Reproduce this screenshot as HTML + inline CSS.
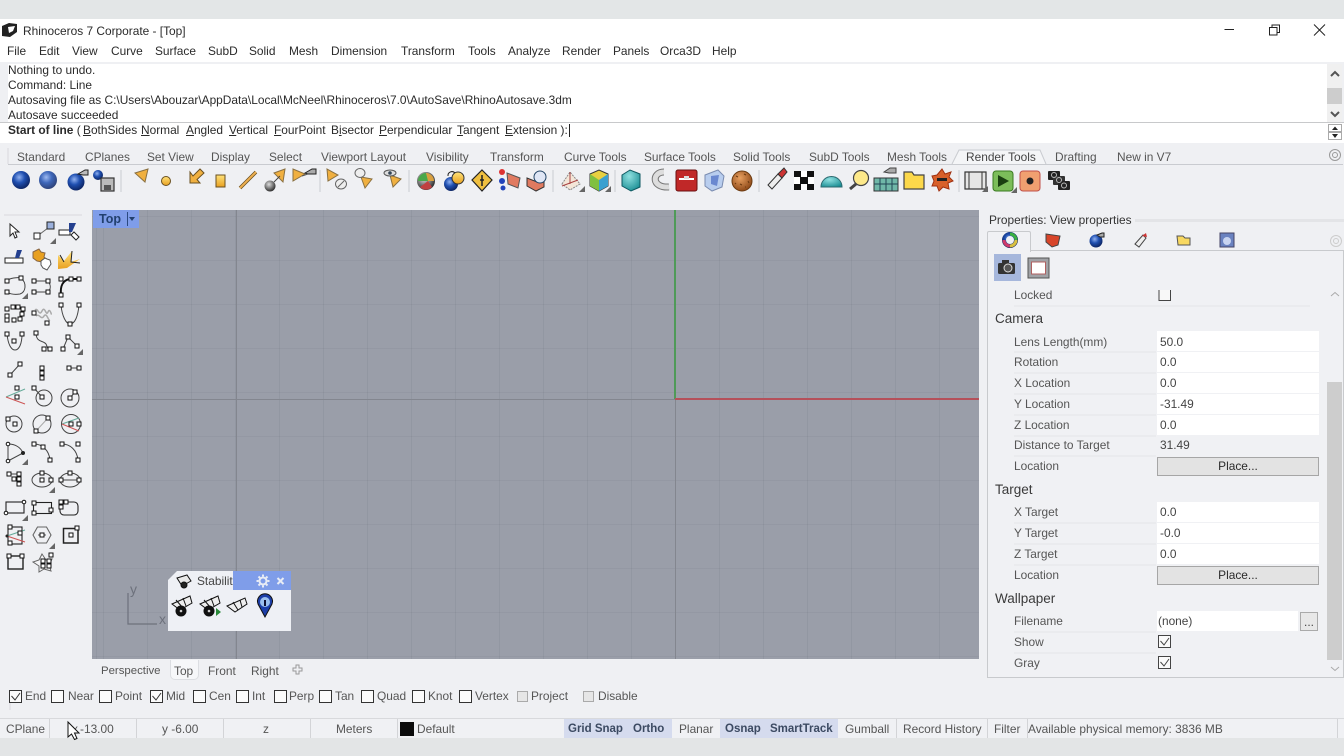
<!DOCTYPE html>
<html><head><meta charset="utf-8"><title>Rhinoceros</title>
<style>
html,body{margin:0;padding:0;width:1344px;height:756px;overflow:hidden;background:#eff0f3}
body{position:relative;font:11.9px/14px "Liberation Sans",sans-serif;color:#2a2a2a}
.b{position:absolute}
.t{position:absolute;white-space:nowrap;line-height:14px}
.g{color:#555}
.h{font-size:13.5px;color:#3a3a3a}
.c{text-align:center}
.st{font-weight:bold;color:#3c4a62;font-size:11.5px}
u{text-decoration:underline}
svg{position:absolute;left:0;top:0;filter:blur(.3px)}
</style></head><body>
<div class="b" style="left:0;top:0;width:1344px;height:19px;background:#e3e6e7"></div>
<div class="b" style="left:0;top:19px;width:1344px;height:43px;background:#fff"></div>
<div class="b" style="left:0;top:738px;width:1344px;height:18px;background:#e3e5e6"></div>
<div class="b" style="left:8px;top:64px;width:1319px;height:58px;background:#fff"></div>
<div class="b" style="left:0;top:122px;width:1344px;height:1px;background:#c8c9cb"></div>
<div class="b" style="left:0;top:123px;width:1344px;height:20px;background:#fff"></div>
<div class="b" style="left:1327px;top:64px;width:15px;height:58px;background:#f0f0f0"></div>
<div class="b" style="left:1327px;top:88px;width:15px;height:16px;background:#cdcdcd"></div>
<div class="b" style="left:8px;top:164px;width:1335px;height:1px;background:#c9cbd0"></div>
<!-- viewport -->
<div class="b" style="left:92px;top:210px;width:887px;height:449px;background-color:#9a9ea9;background-image:repeating-linear-gradient(90deg,rgba(70,75,90,.09) 0 1px,transparent 1px 44px),repeating-linear-gradient(0deg,rgba(70,75,90,.07) 0 1px,transparent 1px 44px);background-position:11px 0,0 -2px"></div>
<div class="b" style="left:92px;top:399px;width:583px;height:1px;background:#83868f"></div>
<div class="b" style="left:236px;top:210px;width:1px;height:449px;background:#83868f"></div>
<div class="b" style="left:675px;top:399px;width:1px;height:260px;background:#83868f"></div>
<div class="b" style="left:674px;top:210px;width:2px;height:189px;background:#4f9a58"></div>
<div class="b" style="left:675px;top:398px;width:304px;height:2px;background:#b5505a"></div>
<div class="b" style="left:93px;top:210px;width:46px;height:18px;background:#7f9de9"></div>
<div class="b" style="left:127px;top:212px;width:1px;height:14px;background:#2b4a80"></div>
<div class="t" style="left:99px;top:212px;font-weight:bold;color:#22406f;font-size:12.5px">Top</div>
<!-- right panel -->
<div class="b" style="left:987px;top:250px;width:355px;height:426px;background:#f0f1f4;border:1px solid #c8cacd"></div>
<div class="b" style="left:987px;top:231px;width:42px;height:20px;background:#f0f1f4;border:1px solid #c8cacd;border-bottom:0;border-radius:2px 2px 0 0"></div>
<div class="b" style="left:1135px;top:219px;width:209px;height:3px;background:#e3e4e7"></div>
<div class="b" style="left:994px;top:254px;width:27px;height:27px;background:#a6b7dc"></div>
<div class="b" style="left:1157px;top:331px;width:162px;height:20px;background:#fff"></div>
<div class="b" style="left:1157px;top:352px;width:162px;height:20px;background:#fff"></div>
<div class="b" style="left:1157px;top:373px;width:162px;height:20px;background:#fff"></div>
<div class="b" style="left:1157px;top:394px;width:162px;height:20px;background:#fff"></div>
<div class="b" style="left:1157px;top:415px;width:162px;height:20px;background:#fff"></div>
<div class="b" style="left:1157px;top:457px;width:160px;height:17px;background:#e3e3e3;border:1px solid #a6a6a6"></div>
<div class="b" style="left:1157px;top:502px;width:162px;height:20px;background:#fff"></div>
<div class="b" style="left:1157px;top:523px;width:162px;height:20px;background:#fff"></div>
<div class="b" style="left:1157px;top:544px;width:162px;height:20px;background:#fff"></div>
<div class="b" style="left:1157px;top:566px;width:160px;height:17px;background:#e3e3e3;border:1px solid #a6a6a6"></div>
<div class="b" style="left:1157px;top:611px;width:141px;height:20px;background:#fff"></div>
<div class="b" style="left:1300px;top:612px;width:16px;height:17px;background:#e8e8e8;border:1px solid #aaa"></div>
<div class="b" style="left:1327px;top:382px;width:15px;height:278px;background:#cdcdcd"></div>
<!-- viewport tabs area -->
<div class="b" style="left:170px;top:660px;width:27px;height:19px;background:#f6f7f9;border:1px solid #dcdee2;border-top:0;border-radius:0 0 5px 5px"></div>
<!-- status bar -->
<div class="b" style="left:0;top:718px;width:1344px;height:20px;background:#f0f1f4;border-top:1px solid #d8d9dc;box-sizing:border-box"></div>
<div class="b" style="left:564px;top:719px;width:63px;height:19px;background:#d5dbee"></div>
<div class="b" style="left:627px;top:719px;width:45px;height:19px;background:#d5dbee"></div>
<div class="b" style="left:720px;top:719px;width:46px;height:19px;background:#d5dbee"></div>
<div class="b" style="left:766px;top:719px;width:72px;height:19px;background:#d5dbee"></div>
<div class="b" style="left:49px;top:719px;width:1px;height:19px;background:#d3d4d7"></div>
<div class="b" style="left:136px;top:719px;width:1px;height:19px;background:#d3d4d7"></div>
<div class="b" style="left:223px;top:719px;width:1px;height:19px;background:#d3d4d7"></div>
<div class="b" style="left:310px;top:719px;width:1px;height:19px;background:#d3d4d7"></div>
<div class="b" style="left:397px;top:719px;width:1px;height:19px;background:#d3d4d7"></div>
<div class="b" style="left:896px;top:719px;width:1px;height:19px;background:#d3d4d7"></div>
<div class="b" style="left:987px;top:719px;width:1px;height:19px;background:#d3d4d7"></div>
<div class="b" style="left:1027px;top:719px;width:1px;height:19px;background:#d3d4d7"></div>
<div class="b" style="left:1337px;top:719px;width:1px;height:19px;background:#d3d4d7"></div>
<!-- floating toolbar -->
<div class="b" style="left:168px;top:571px;width:123px;height:60px;background:#eef0f5;clip-path:polygon(9px 0,100% 0,100% 100%,0 100%,0 9px)"></div>
<div class="b" style="left:233px;top:571px;width:58px;height:19px;background:#7f9de9"></div>

<svg width="1344" height="756" viewBox="0 0 1344 756" fill="none">
<defs>
<radialGradient id="bl" cx=".4" cy=".35" r=".7"><stop offset="0" stop-color="#8fb0f0"/><stop offset=".45" stop-color="#1f4fb0"/><stop offset="1" stop-color="#0a1f5a"/></radialGradient>
<radialGradient id="gr" cx=".4" cy=".35" r=".7"><stop offset="0" stop-color="#ddd"/><stop offset="1" stop-color="#222"/></radialGradient>
<radialGradient id="br" cx=".4" cy=".35" r=".7"><stop offset="0" stop-color="#e8a060"/><stop offset="1" stop-color="#8a4515"/></radialGradient>
<radialGradient id="te" cx=".4" cy=".3" r=".8"><stop offset="0" stop-color="#8fe0e0"/><stop offset="1" stop-color="#158a90"/></radialGradient>
<linearGradient id="ye" x1="0" y1="0" x2="0" y2="1"><stop offset="0" stop-color="#ffe27a"/><stop offset="1" stop-color="#e8a020"/></linearGradient>
<rect id="n" x="-2" y="-2" width="4" height="4" fill="#fff" stroke="#111" stroke-width="1"/>
<path id="tri" d="M0 6H6V0Z" fill="#666"/>
</defs>
<!-- title icon -->
<path d="M2 26L9 23L17 24L17 32L10 37L2 36Z" fill="#222"/><path d="M8 27L15 26L13 31L9 33Z" fill="#fff"/>
<!-- window controls -->
<path d="M1224.500 29.500H1234" stroke="#222"/>
<path d="M1269.500 27.500h7.500v7.500h-7.500z M1272 27.500v-2.500h7.500v7.500h-2.500" stroke="#222"/>
<path d="M1314 24.500L1325 35.500M1325 24.500L1314 35.500" stroke="#222"/>
<!-- cmd scroll -->
<path d="M1331 76L1335 72L1339 76M1331 112L1335 116L1339 112" stroke="#555" stroke-width="2"/>
<rect x="1328.500" y="124.500" width="13" height="7" stroke="#aaa" fill="#fff"/><rect x="1328.500" y="132.500" width="13" height="7" stroke="#aaa" fill="#fff"/>
<path d="M1332 130L1335 126.500L1338 130ZM1332 134L1335 138L1338 134Z" fill="#222"/>
<!-- gear top -->
<g stroke="#999" fill="none"><circle cx="1335" cy="155" r="5.500"/><circle cx="1335" cy="155" r="2.500"/></g>
<!-- tab separator render tools -->
<path d="M952 164L959 150H1040L1046 164" stroke="#c9cbd0" fill="#f4f5f7"/>
<path d="M8 148V164M4 215H82M10 690V710" stroke="#d8d9dc"/>
<!-- separators -->
<path d="M121 170V192M320 170V192M409 170V192M553 170V192M615 170V192M759 170V192M959 170V192" stroke="#c9cbd0"/>

<!-- top toolbar -->
<circle cx="21" cy="180" r="9" fill="url(#bl)"/>
<circle cx="48" cy="180" r="9" fill="url(#bl)" opacity=".85"/>
<circle cx="76" cy="182" r="8.500" fill="url(#bl)"/><path d="M78 174L85 170H88V175H83Z" fill="#bbb" stroke="#222"/>
<circle cx="98" cy="175" r="5" fill="url(#bl)"/><rect x="101" y="178" width="13" height="13" fill="#bbb" stroke="#333" stroke-width="1.200"/><rect x="104" y="185" width="7" height="5" fill="#555"/>
<g fill="#f0b040" stroke="#8a7040">
<path d="M135 173L148 169L145 182Z"/>
<path d="M285 169L274 173L283 182Z"/>
<path d="M293 169L293 181L305 174Z"/>
<path d="M327 169L328 181L338 175Z"/>
<path d="M361 177L372 179L365 188Z"/>
<path d="M390 175L401 179L393 187Z"/>
</g>
<circle cx="166" cy="181" r="4.500" fill="url(#ye)" stroke="#6a5020"/>
<path d="M190 172V183H200L197 179.500L204 173L200 169L193 176Z" fill="#f0b040" stroke="#6a5020"/>
<rect x="216" y="175" width="9" height="12" fill="url(#ye)" stroke="#6a5020"/>
<path d="M240 188L256 172" stroke="#6a5020" stroke-width="3.500"/><path d="M240 188L256 172" stroke="#eeb050" stroke-width="2"/>
<circle cx="270" cy="186" r="5.500" fill="url(#gr)"/><path d="M274 182L280 176" stroke="#444"/>
<path d="M305 173L312 169H316V174H308Z" fill="#aaa" stroke="#222"/><path d="M302 176L308 174" stroke="#555"/>
<ellipse cx="341" cy="184" rx="5.500" ry="5" stroke="#666" fill="#eee"/><path d="M338 187L344 181" stroke="#666"/>
<ellipse cx="360" cy="173" rx="5" ry="4.500" stroke="#666" fill="#eee"/>
<ellipse cx="390" cy="173" rx="6" ry="3" stroke="#555" fill="#ddd"/><circle cx="390" cy="173" r="1.800" fill="#345"/>
<circle cx="426" cy="181" r="9" fill="url(#gr)"/><path d="M418 181a8 8 0 0 1 8 -8l3 8z" fill="#4aa84a"/><path d="M426 173a8 8 0 0 1 8 8h-6z" fill="#d9a040"/><path d="M420 187a8 8 0 0 0 12 0l-4 -6z" fill="#c04040"/>
<circle cx="451" cy="184" r="7" fill="url(#bl)"/><circle cx="458" cy="178" r="6" fill="url(#ye)" stroke="#333"/><path d="M448 176a4 4 0 0 1 7 -3" stroke="#222"/>
<path d="M482 170L492 180L482 191L472 180Z" fill="#f0c040" stroke="#222" stroke-width="1.200"/><path d="M482 175V186M480 180H484" stroke="#222" stroke-width="1.500"/>
<circle cx="502" cy="172" r="3" fill="#d33"/><circle cx="502" cy="181" r="3" fill="#24b"/><path d="M507 173L520 178L518 188L508 184Z" fill="#e07a60" stroke="#555"/><circle cx="503" cy="188" r="2.500" fill="#24b"/>
<path d="M527 178L537 182L544 178L544 187L536 191L527 186Z" fill="#e07a60" stroke="#333"/><circle cx="540" cy="177" r="6" stroke="#246" fill="#dfe6f5"/>
<path d="M562 184L570 172L580 184L570 190Z" stroke="#888" stroke-dasharray="2 1" fill="#f4e6d8"/><path d="M570 172V184M562 186L578 180" stroke="#a44"/><use href="#tri" transform="translate(579 186)"/>
<path d="M590 174L599 170L608 174V186L599 191L590 186Z" fill="#e8d040" stroke="#333"/><path d="M599 180L608 174V186L599 191Z" fill="#3aa0d0"/><path d="M590 174L599 180V191L590 186Z" fill="#80c040"/><use href="#tri" transform="translate(605 186)"/>
<path d="M622 175L630 170L640 174V187L631 191L622 186Z" fill="url(#te)" stroke="#0d5860"/>
<path d="M664 172C652 172 651 188 669 187" stroke="#777" stroke-width="7"/><path d="M664 172C652 172 651 188 669 187" stroke="#ddd" stroke-width="5"/>
<rect x="676" y="170" width="21" height="21" rx="2" fill="#c02828" stroke="#6a1010"/><rect x="679" y="178" width="15" height="2" fill="#fff"/><rect x="684" y="176" width="5" height="3" fill="#ddd"/>
<path d="M705 175L718 170L724 176L722 187L712 191L705 186Z" fill="#b8cdee" stroke="#7a8cb0"/><path d="M711 176L719 175L717 186L711 184Z" fill="#6a88d0"/>
<circle cx="742" cy="181" r="10" fill="url(#br)" stroke="#6a3a10"/><path d="M736 176l2 1M744 174l2 1M748 181l1 2M740 184l2 1M735 183l1 1M745 187l1 0" stroke="#6a3a10"/>
<path d="M768 185L778 174L782 178L772 189Z" fill="#eee" stroke="#333"/><path d="M778 174L784 168L787 172L782 178Z" fill="#c33" stroke="#333"/>
<rect x="794" y="171" width="20" height="19" fill="#111"/><rect x="801" y="171" width="6" height="6" fill="#fff"/><rect x="794" y="177" width="6" height="7" fill="#fff"/><rect x="808" y="177" width="6" height="7" fill="#fff"/><rect x="801" y="184" width="6" height="6" fill="#fff"/>
<path d="M821 187a10 10 0 0 1 21 0Z" fill="url(#te)" stroke="#2c6a70"/>
<circle cx="861" cy="178" r="7.500" fill="#fde98a" stroke="#444" stroke-width="1.200"/><path d="M856 184L850 189" stroke="#444" stroke-width="3"/>
<rect x="874" y="178" width="24" height="13" fill="#6fb7a8" stroke="#333"/><path d="M880 178v13M886 178v13M892 178v13M874 184h24" stroke="#245"/><path d="M884 172L890 168H896V173H889Z" fill="#aaa" stroke="#444"/>
<path d="M904 172H912L914 175H924V189H904Z" fill="#fcd84a" stroke="#444" stroke-width="1.200"/>
<path d="M942 169L945 174L951 172L949 177L953 181L948 183L949 189L943 187L939 191L937 186L932 186L934 181L932 176L937 175Z" fill="#d8602a" stroke="#a03010"/><rect x="937" y="178" width="10" height="3" fill="#222"/>
<rect x="965" y="172" width="21" height="17" fill="#e6e6e6" stroke="#333" stroke-width="1.200"/><path d="M969 172v17M982 172v17" stroke="#333"/><use href="#tri" transform="translate(982 186)"/>
<rect x="993" y="171" width="20" height="20" rx="3" fill="#7cbd5a" stroke="#3a7a20"/><path d="M998 175L1009 181L998 187Z" fill="#1a4010"/><use href="#tri" transform="translate(1011 187)"/>
<rect x="1020" y="171" width="20" height="20" rx="3" fill="#f0a070" stroke="#c0504a"/><circle cx="1030" cy="181" r="3.500" fill="#222"/>
<rect x="1048" y="171" width="12" height="9" rx="1" fill="#222"/><rect x="1053" y="176" width="12" height="9" rx="1" fill="#333"/><rect x="1058" y="181" width="12" height="9" rx="1" fill="#222"/><circle cx="1054" cy="175" r="2.500" stroke="#bbb"/><circle cx="1059" cy="180" r="2.500" stroke="#bbb"/><circle cx="1064" cy="185.500" r="2.500" stroke="#bbb"/>

<!-- left toolbar -->
<g stroke="#222" stroke-width="1">
<path d="M10 224L10 236L13 233L15 238L17 237L15 232L19 232Z" fill="#fff"/>
<path d="M40 234L48 228" stroke="#666"/><rect x="34" y="233" width="6" height="6" fill="#fff"/><rect x="47" y="222" width="7" height="7" fill="#9bb0dc"/><use href="#tri" transform="translate(50 238)" stroke="none"/>
<rect x="59" y="230" width="11" height="5" fill="#fff"/><path d="M69 223H76L72 232H69Z" fill="#24408f" stroke="none"/><path d="M71 235L76 240L79 237L74 232Z" fill="#fff"/>
<rect x="5" y="258" width="18" height="5" fill="#fff"/><path d="M17 250H22L19 258H15Z" fill="#24408f" stroke="none"/>
<path d="M33 252l4 -2 2 -1 2 3 4 1 -1 4 2 2 -4 3 -5 -1 -4 -3z" fill="#e8a020" stroke="#864"/><path d="M41 261l4 -3 2 1 3 1 1 4 -2 3 -2 3 -4 -2 -2 -3z" fill="#fff" stroke="#555"/>
<path d="M58 269V255L64 261L72 251L71 262L80 259L67 268Z" fill="url(#ye)" stroke="none"/><path d="M60 255L64 262M72 251L71 262L80 263" stroke="#222"/>
</g>
<g stroke="#444" stroke-width="1">
<path d="M7 281C9 278 18 277 21 278C27 283 26 292 20 294C14 295 10 294 7 292"/>
<path d="M34 281H48C51 285 51 289 48 292H34"/>
<path d="M61 295C60 286 63 280 70 279H79" stroke="#111" stroke-width="2"/>
<path d="M35 310c3 -3 4 7 7 1c3 -6 4 6 6 1c2 -5 4 5 3 1M36 316c4 -3 5 5 8 0c3 -4 4 5 6 4" stroke="#aaa" stroke-width="1.500"/>
<path d="M61 305C62 316 66 324 70 324C75 324 78 316 79 305"/>
<path d="M7 334C8 344 11 350 15 350C19 350 22 344 22 334"/>
<path d="M36 334C37 343 43 340 46 344C48 348 47 349 50 349"/>
<path d="M63 349L68 337L77 346"/>
<path d="M10 375L20 364"/><path d="M42 368V378"/><path d="M69 368H79"/>
<path d="M6 397L25 389" stroke="#6a9"/><path d="M6 397L25 404" stroke="#c55"/>
<path d="M34 388L42 397"/><circle cx="44" cy="398" r="8"/><circle cx="70" cy="398" r="9"/><path d="M70 398L75 392"/>
<circle cx="14" cy="424" r="8"/><circle cx="42" cy="424" r="9"/><path d="M36 431L48 418" stroke="#aaa"/><circle cx="71" cy="424" r="9.500"/><path d="M62 424L79 418" stroke="#6a9"/><path d="M62 424L79 431" stroke="#c55"/>
<path d="M8 444C16 444 21 448 23 453L8 461Z"/><path d="M34 444C42 444 49 450 50 460"/><path d="M62 444C70 444 77 450 78 460"/>
<ellipse cx="42" cy="480" rx="10" ry="7"/><ellipse cx="70" cy="480" rx="10" ry="7"/><path d="M61 480H79"/>
<path d="M9 474H19M14 479H19V484"/>
</g>
<g stroke="#222" stroke-width="1.100">
<rect x="6" y="502" width="18" height="11"/><rect x="33.500" y="502.500" width="18" height="11"/><rect x="60" y="502" width="18" height="13" rx="4"/>
<rect x="8" y="527" width="14" height="17"/><path d="M7 536L25 530" stroke="#6a9"/><path d="M7 536L25 542" stroke="#c55"/>
<path d="M33 535l4.500 -8h9l4.500 8l-4.500 8h-9z" stroke="#666"/><path d="M38 535H46" stroke="#666"/><rect x="63.500" y="528.500" width="14.500" height="14.500" stroke-width="1.500"/><rect x="8" y="556" width="15" height="13" stroke-width="1.400"/>
<path d="M42 554L46 560L52 559L49 565L51 571L44 569L39 572L39 566L33 562L39 560Z" stroke="#666" stroke-width="1" fill="#f4f4f6"/>
</g>
<g>
<use href="#tri" x="22" y="293"/>
<use href="#n" x="7" y="281"/><use href="#n" x="21" y="278"/><use href="#n" x="7" y="292"/>
<use href="#n" x="34" y="281"/><use href="#n" x="48" y="281"/><use href="#n" x="34" y="292"/><use href="#n" x="48" y="292"/>
<use href="#n" x="61" y="295"/><use href="#n" x="61" y="279"/><use href="#n" x="71" y="279"/><use href="#n" x="79" y="279"/>
<use href="#n" x="7" y="309"/><use href="#n" x="13" y="307"/><use href="#n" x="18" y="307"/><use href="#n" x="23" y="309"/><use href="#n" x="22" y="314"/><use href="#n" x="7" y="316"/><use href="#n" x="7" y="320"/><use href="#n" x="14" y="320"/><use href="#n" x="20" y="319"/>
<use href="#n" x="34" y="313"/><use href="#n" x="47" y="323"/>
<use href="#n" x="61" y="305"/><use href="#n" x="70" y="324"/><use href="#n" x="79" y="305"/>
<use href="#n" x="7" y="334"/><use href="#n" x="14" y="341"/><use href="#n" x="22" y="334"/>
<use href="#n" x="36" y="333"/><use href="#n" x="44" y="349"/><use href="#n" x="50" y="349"/>
<use href="#tri" x="77" y="349"/><use href="#n" x="63" y="349"/><use href="#n" x="68" y="337"/><use href="#n" x="77" y="346"/>
<use href="#n" x="10" y="375"/><use href="#n" x="20" y="364"/><use href="#n" x="42" y="368"/><use href="#n" x="42" y="373"/><use href="#n" x="42" y="378"/><use href="#n" x="69" y="368"/><use href="#n" x="79" y="368"/>
<use href="#n" x="17" y="388"/><use href="#n" x="17" y="397"/><use href="#n" x="34" y="388"/><use href="#n" x="42" y="397"/><use href="#n" x="75" y="392"/><use href="#n" x="70" y="398"/>
<use href="#n" x="8" y="419"/><use href="#n" x="15" y="424"/><use href="#n" x="36" y="431"/><use href="#n" x="48" y="418"/><use href="#n" x="71" y="424"/><use href="#n" x="79" y="424"/>
<use href="#tri" x="22" y="459"/>
<circle cx="8" cy="444" r="1.800" fill="#fff" stroke="#111"/><circle cx="8" cy="461" r="1.800" fill="#fff" stroke="#111"/><circle cx="23" cy="453" r="2" fill="#222"/>
<use href="#n" x="34" y="444"/><use href="#n" x="43" y="447"/><use href="#n" x="50" y="460"/><use href="#n" x="62" y="444"/><use href="#n" x="78" y="444"/><use href="#n" x="78" y="460"/>
<use href="#n" x="9" y="474"/><use href="#n" x="19" y="474"/><use href="#n" x="14" y="479"/><use href="#n" x="19" y="479"/><use href="#n" x="19" y="484"/>
<use href="#tri" x="49" y="487"/><use href="#n" x="42" y="473"/><use href="#n" x="42" y="480"/><use href="#n" x="51" y="480"/>
<use href="#n" x="61" y="480"/><use href="#n" x="70" y="473"/><use href="#n" x="79" y="480"/>
<use href="#tri" x="22" y="515"/><circle cx="6" cy="513" r="1.800" fill="#fff" stroke="#111"/><circle cx="24" cy="502" r="1.800" fill="#fff" stroke="#111"/>
<use href="#n" x="34" y="503"/><use href="#n" x="34" y="513"/><use href="#n" x="51" y="510"/>
<use href="#n" x="61" y="502"/><use href="#n" x="66" y="502"/><use href="#n" x="61" y="507"/>
<use href="#n" x="10" y="527"/><use href="#n" x="20" y="533"/><use href="#n" x="10" y="543"/><circle cx="7" cy="536" r="1.500" fill="#222"/>
<use href="#tri" x="49" y="543"/><use href="#n" x="42" y="535"/><use href="#n" x="71" y="535"/><use href="#n" x="77" y="528"/>
<use href="#n" x="9" y="556"/><use href="#n" x="22" y="556"/><use href="#n" x="43" y="561"/><use href="#n" x="49" y="561"/><use href="#n" x="43" y="566"/><use href="#n" x="49" y="566"/><use href="#n" x="51" y="555"/>
</g>

<!-- top tab arrow -->
<path d="M129 217H135L132 221Z" fill="#22406f"/>
<!-- axis icon -->
<path d="M128 593V624H157" stroke="#6d717c" stroke-width="1.200"/>
<!-- float toolbar icons -->
<g stroke="#111">
<path d="M177 578L187 575L191 581L182 586Z" fill="#e8e8e8"/><circle cx="184" cy="585" r="3" fill="#222"/>
<path d="M172 604L190 596L192 603L180 610Z" fill="#eee"/><path d="M176 600L183 608M183 598L186 606"/><circle cx="181" cy="611" r="5" fill="#111"/><circle cx="181" cy="611" r="1.800" fill="#ccc"/>
<path d="M200 604L218 596L220 603L208 610Z" fill="#eee"/><path d="M204 600L211 608M211 598L214 606"/><circle cx="209" cy="611" r="5" fill="#111"/><circle cx="209" cy="611" r="1.800" fill="#ccc"/><path d="M216 608L221 612L216 616Z" fill="#2a8a3a" stroke="none"/>
<path d="M227 606L245 598L247 604L235 612Z" fill="#eee"/><path d="M233 602L238 610M240 600L242 607"/>
<path d="M265 617L258 604A7.500 7.500 0 1 1 272 604Z" fill="#1c3ea8"/><circle cx="265" cy="602" r="5" fill="#9cc0ee" stroke="none"/><rect x="264" y="600" width="2" height="6" fill="#113" stroke="none"/>
</g>
<g stroke="#e8ecf5" stroke-width="2"><circle cx="263" cy="581" r="3.500"/><path d="M263 574.500v2M263 585.500v2M256.500 581h2M267.500 581h2M258.500 576.500l1.500 1.500M266 584l1.500 1.500M258.500 585.500l1.500 -1.500M266 578l1.500 -1.500"/><path d="M277.500 578L283.500 584M283.500 578L277.500 584"/></g>

<!-- properties icons -->
<circle cx="1010" cy="240" r="6" stroke="url(#bl)" stroke-width="4"/><path d="M1010 234a6 6 0 0 1 6 6" stroke="#3ab040" stroke-width="3"/><path d="M1016 240a6 6 0 0 1 -6 6" stroke="#d9c040" stroke-width="3"/><path d="M1010 246a6 6 0 0 1 -6 -6" stroke="#d03a6a" stroke-width="3"/>
<path d="M1046 234L1060 236L1058 245L1052 247L1046 242Z" fill="#d8452a" stroke="#444"/>
<circle cx="1096" cy="241" r="6.500" fill="url(#bl)"/><path d="M1097 235L1102 233H1104V237H1100Z" fill="#aaa" stroke="#222"/>
<path d="M1135 244L1143 235L1146 238L1139 247Z" fill="#eee" stroke="#444"/><path d="M1142 236L1146 233L1147 237Z" fill="#c33"/>
<path d="M1177 236H1183L1185 238H1190V245H1178Z" fill="#f8d860" stroke="#555"/>
<rect x="1220" y="233" width="14" height="14" fill="#6a82c0" stroke="#446"/><circle cx="1227" cy="241" r="4" fill="#c8d4f0"/>
<g stroke="#ccc"><circle cx="1336" cy="241" r="5.500"/><circle cx="1336" cy="241" r="2.500"/></g>
<rect x="998" y="263" width="17" height="11" rx="1.500" fill="#333"/><rect x="1002" y="260" width="7" height="4" fill="#333"/><circle cx="1008" cy="268" r="4" fill="#555" stroke="#ddd"/>
<rect x="1028" y="258" width="21" height="20" fill="#a0a2a6" stroke="#555"/><rect x="1031.500" y="262" width="14" height="12" fill="#fff" stroke="#b06060"/>
<!-- checkboxes right -->
<path d="M1159 290V300.500H1170.500V290" stroke="#444" fill="#f8f8f8"/>
<rect x="1158.500" y="635.500" width="12" height="12" stroke="#444" fill="#fafafa"/><path d="M1160.500 641L1164 645L1169 638" stroke="#444"/>
<rect x="1158.500" y="656.500" width="12" height="12" stroke="#444" fill="#fafafa"/><path d="M1160.500 662L1164 666L1169 659" stroke="#444"/>
<path d="M1331 296L1335 292.500L1339 296M1331 667L1335 670.500L1339 667" stroke="#aaa"/>
<!-- property row lines -->
<path d="M1014 306H1310M1014 352H1156M1014 373H1156M1014 394H1156M1014 415H1156M1014 436H1156M1014 456H1156M1014 523H1156M1014 544H1156M1014 565H1156M1014 632H1156M1014 653H1156" stroke="#e4e5e8"/>
<!-- snap boxes -->
<g stroke="#333" fill="#fbfbfb">
<rect x="9.500" y="690.500" width="12" height="12"/><rect x="51.500" y="690.500" width="12" height="12"/><rect x="99.500" y="690.500" width="12" height="12"/><rect x="150.500" y="690.500" width="12" height="12"/><rect x="193.500" y="690.500" width="12" height="12"/><rect x="236.500" y="690.500" width="12" height="12"/><rect x="274.500" y="690.500" width="12" height="12"/><rect x="319.500" y="690.500" width="12" height="12"/><rect x="361.500" y="690.500" width="12" height="12"/><rect x="412.500" y="690.500" width="12" height="12"/><rect x="459.500" y="690.500" width="12" height="12"/>
</g>
<rect x="517.500" y="691.500" width="10" height="10" stroke="#aaa" fill="#e6e6e6"/><rect x="583.500" y="691.500" width="10" height="10" stroke="#aaa" fill="#e6e6e6"/>
<path d="M11.500 696L15 700L20 693M152.500 696L156 700L161 693" stroke="#333"/>
<!-- plus icon -->
<path d="M296 666h3v3h3v3h-3v3h-3v-3h-3v-3h3z" stroke="#999" transform="translate(0 -1)"/>
<!-- color swatch -->
<rect x="400" y="722" width="14" height="14" fill="#0b0b0b"/>
</svg>

<div class="t" style="left:23px;top:24px">Rhinoceros 7 Corporate - [Top]</div>
<div class="t" style="left:7px;top:44px">File</div>
<div class="t" style="left:39px;top:44px">Edit</div>
<div class="t" style="left:72px;top:44px">View</div>
<div class="t" style="left:111px;top:44px">Curve</div>
<div class="t" style="left:155px;top:44px">Surface</div>
<div class="t" style="left:208px;top:44px">SubD</div>
<div class="t" style="left:249px;top:44px">Solid</div>
<div class="t" style="left:289px;top:44px">Mesh</div>
<div class="t" style="left:331px;top:44px">Dimension</div>
<div class="t" style="left:401px;top:44px">Transform</div>
<div class="t" style="left:468px;top:44px">Tools</div>
<div class="t" style="left:508px;top:44px">Analyze</div>
<div class="t" style="left:562px;top:44px">Render</div>
<div class="t" style="left:613px;top:44px">Panels</div>
<div class="t" style="left:660px;top:44px">Orca3D</div>
<div class="t" style="left:712px;top:44px">Help</div>

<div class="t" style="left:8px;top:63px">Nothing to undo.</div>
<div class="t" style="left:8px;top:78px">Command: Line</div>
<div class="t" style="left:8px;top:93px">Autosaving file as C:\Users\Abouzar\AppData\Local\McNeel\Rhinoceros\7.0\AutoSave\RhinoAutosave.3dm</div>
<div class="t" style="left:8px;top:108px">Autosave succeeded</div>
<div class="t" style="left:8px;top:123px"><b>Start of line</b> (</div>
<div class="t" style="left:83px;top:123px"><u>B</u>othSides</div>
<div class="t" style="left:141px;top:123px"><u>N</u>ormal</div>
<div class="t" style="left:186px;top:123px"><u>A</u>ngled</div>
<div class="t" style="left:229px;top:123px"><u>V</u>ertical</div>
<div class="t" style="left:274px;top:123px"><u>F</u>ourPoint</div>
<div class="t" style="left:331px;top:123px">B<u>i</u>sector</div>
<div class="t" style="left:379px;top:123px"><u>P</u>erpendicular</div>
<div class="t" style="left:457px;top:123px"><u>T</u>angent</div>
<div class="t" style="left:505px;top:123px"><u>E</u>xtension ):</div>
<div class="b" style="left:569px;top:124px;width:1px;height:13px;background:#222"></div>

<div class="t g" style="left:17px;top:150px">Standard</div>
<div class="t g" style="left:85px;top:150px">CPlanes</div>
<div class="t g" style="left:147px;top:150px">Set View</div>
<div class="t g" style="left:211px;top:150px">Display</div>
<div class="t g" style="left:269px;top:150px">Select</div>
<div class="t g" style="left:321px;top:150px">Viewport Layout</div>
<div class="t g" style="left:426px;top:150px">Visibility</div>
<div class="t g" style="left:490px;top:150px">Transform</div>
<div class="t g" style="left:564px;top:150px">Curve Tools</div>
<div class="t g" style="left:644px;top:150px">Surface Tools</div>
<div class="t g" style="left:733px;top:150px">Solid Tools</div>
<div class="t g" style="left:809px;top:150px">SubD Tools</div>
<div class="t g" style="left:887px;top:150px">Mesh Tools</div>
<div class="t" style="left:966px;top:150px;color:#444">Render Tools</div>
<div class="t g" style="left:1055px;top:150px">Drafting</div>
<div class="t g" style="left:1117px;top:150px">New in V7</div>

<div class="t" style="left:197px;top:574px;color:#444">Stabilit</div>
<div class="t" style="left:130px;top:582px;color:#6d717c;font-size:14px">y</div>
<div class="t" style="left:159px;top:612px;color:#6d717c;font-size:14px">x</div>

<div class="t" style="left:989px;top:213px;color:#333">Properties: View properties</div>
<div class="t g" style="left:1014px;top:288px">Locked</div>
<div class="t h" style="left:995px;top:312px">Camera</div>
<div class="t g" style="left:1014px;top:335px">Lens Length(mm)</div><div class="t" style="left:1160px;top:335px;color:#444">50.0</div>
<div class="t g" style="left:1014px;top:355px">Rotation</div><div class="t" style="left:1160px;top:355px;color:#444">0.0</div>
<div class="t g" style="left:1014px;top:376px">X Location</div><div class="t" style="left:1160px;top:376px;color:#444">0.0</div>
<div class="t g" style="left:1014px;top:397px">Y Location</div><div class="t" style="left:1160px;top:397px;color:#444">-31.49</div>
<div class="t g" style="left:1014px;top:418px">Z Location</div><div class="t" style="left:1160px;top:418px;color:#444">0.0</div>
<div class="t g" style="left:1014px;top:438px">Distance to Target</div><div class="t" style="left:1160px;top:438px;color:#444">31.49</div>
<div class="t g" style="left:1014px;top:459px">Location</div><div class="t c" style="left:1157px;top:459px;width:162px">Place...</div>
<div class="t h" style="left:995px;top:483px">Target</div>
<div class="t g" style="left:1014px;top:505px">X Target</div><div class="t" style="left:1160px;top:505px;color:#444">0.0</div>
<div class="t g" style="left:1014px;top:526px">Y Target</div><div class="t" style="left:1160px;top:526px;color:#444">-0.0</div>
<div class="t g" style="left:1014px;top:547px">Z Target</div><div class="t" style="left:1160px;top:547px;color:#444">0.0</div>
<div class="t g" style="left:1014px;top:568px">Location</div><div class="t c" style="left:1157px;top:568px;width:162px">Place...</div>
<div class="t h" style="left:995px;top:592px">Wallpaper</div>
<div class="t g" style="left:1014px;top:614px">Filename</div><div class="t" style="left:1158px;top:614px;color:#444">(none)</div><div class="t c" style="left:1300px;top:615px;width:18px;color:#444">...</div>
<div class="t g" style="left:1014px;top:635px">Show</div>
<div class="t g" style="left:1014px;top:656px">Gray</div>

<div class="t g" style="left:101px;top:664px;font-size:11.4px">Perspective</div>
<div class="t g" style="left:174px;top:664px">Top</div>
<div class="t g" style="left:208px;top:664px">Front</div>
<div class="t g" style="left:251px;top:664px">Right</div>

<div class="t g" style="left:25px;top:689px">End</div>
<div class="t g" style="left:68px;top:689px">Near</div>
<div class="t g" style="left:115px;top:689px">Point</div>
<div class="t g" style="left:166px;top:689px">Mid</div>
<div class="t g" style="left:209px;top:689px">Cen</div>
<div class="t g" style="left:252px;top:689px">Int</div>
<div class="t g" style="left:289px;top:689px">Perp</div>
<div class="t g" style="left:335px;top:689px">Tan</div>
<div class="t g" style="left:377px;top:689px">Quad</div>
<div class="t g" style="left:428px;top:689px">Knot</div>
<div class="t g" style="left:475px;top:689px">Vertex</div>
<div class="t g" style="left:531px;top:689px">Project</div>
<div class="t g" style="left:598px;top:689px">Disable</div>

<div class="t g" style="left:6px;top:722px">CPlane</div>
<div class="t g" style="left:72px;top:722px">x</div>
<div class="t g" style="left:80px;top:722px">-13.00</div>
<div class="t g" style="left:162px;top:722px">y -6.00</div>
<div class="t g" style="left:263px;top:722px">z</div>
<div class="t g" style="left:336px;top:722px">Meters</div>
<div class="t g" style="left:417px;top:722px">Default</div>
<div class="t st" style="left:568px;top:722px">Grid Snap</div>
<div class="t st" style="left:633px;top:722px">Ortho</div>
<div class="t g" style="left:679px;top:722px">Planar</div>
<div class="t st" style="left:725px;top:722px">Osnap</div>
<div class="t st" style="left:770px;top:722px">SmartTrack</div>
<div class="t g" style="left:845px;top:722px">Gumball</div>
<div class="t g" style="left:903px;top:722px">Record History</div>
<div class="t g" style="left:994px;top:722px">Filter</div>
<div class="t g" style="left:1028px;top:722px">Available physical memory: 3836 MB</div>
<svg width="1344" height="756" viewBox="0 0 1344 756" fill="none"><path d="M68 722V737L71.500 734L74.500 739.500L77 738.500L74.500 733H79Z" fill="#fff" stroke="#111"/></svg>
</body></html>
